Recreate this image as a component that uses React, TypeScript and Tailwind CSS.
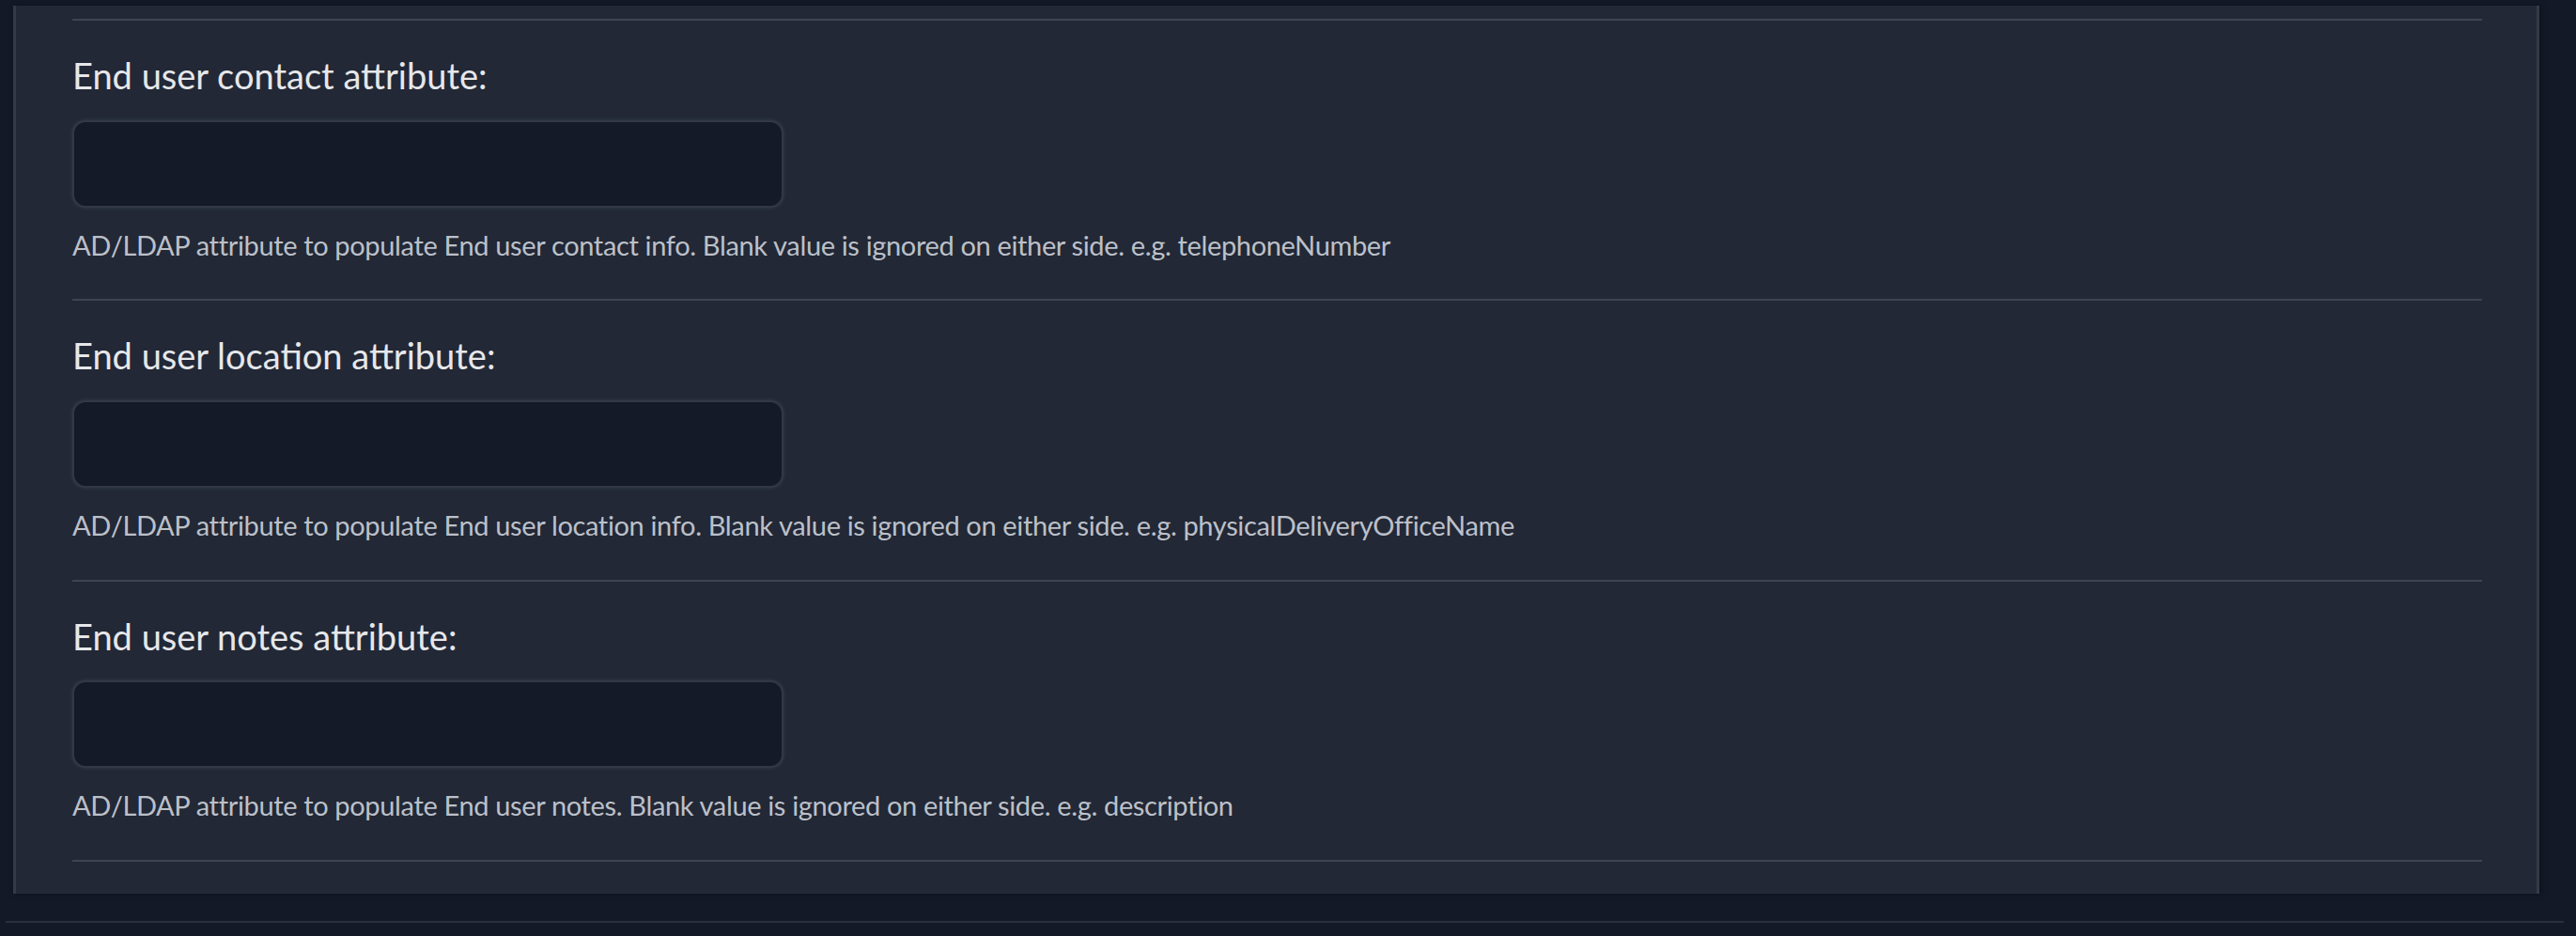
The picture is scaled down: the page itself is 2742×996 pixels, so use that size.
const fields = [
  {
    label: "End user contact attribute:",
    help: "AD/LDAP attribute to populate End user contact info. Blank value is ignored on either side. e.g. telephoneNumber",
  },
  {
    label: "End user location attribute:",
    help: "AD/LDAP attribute to populate End user location info. Blank value is ignored on either side. e.g. physicalDeliveryOfficeName",
  },
  {
    label: "End user notes attribute:",
    help: "AD/LDAP attribute to populate End user notes. Blank value is ignored on either side. e.g. description",
  },
];

function Field({ label, help }: { label: string; help: string }) {
  return (
    <div className="flex flex-col">
      <label className="mt-[36px] text-[38px] leading-[1.2] text-[#e6e7ea]">{label}</label>
      <input
        type="text"
        className="mt-[24px] h-[93px] w-[757px] rounded-[14px] border-2 border-[#323846] bg-[#141a27] shadow-[0_0_4px_rgba(120,130,150,0.25)] outline-none"
      />
      <p className="mt-[23px] text-[29px] leading-[1.2] tracking-[-0.35px] text-[#bcc0c9]">{help}</p>
      <div className="mt-[40px] h-[2px] bg-[#3e4452]" />
    </div>
  );
}

export default function App() {
  return (
    <div
      className="min-h-[996px] w-full bg-[#131927] pt-[6px]"
      style={{ fontFamily: "Lato, 'Open Sans', sans-serif" }}
    >
      <div className="ml-[14px] mr-[39px] h-[945px] border-x-[3px] border-[#343a47] bg-[#222836] pl-[60px] pr-[58px] pt-[14px] shadow-[2px_0_6px_rgba(0,0,0,0.35)]">
        <div className="h-[2px] bg-[#3e4452]" />
        {fields.map((f) => (
          <Field key={f.label} label={f.label} help={f.help} />
        ))}
      </div>
      <div className="ml-[6px] mr-[13px] mt-[29px] h-[2px] bg-[#2b303c]" />
    </div>
  );
}
